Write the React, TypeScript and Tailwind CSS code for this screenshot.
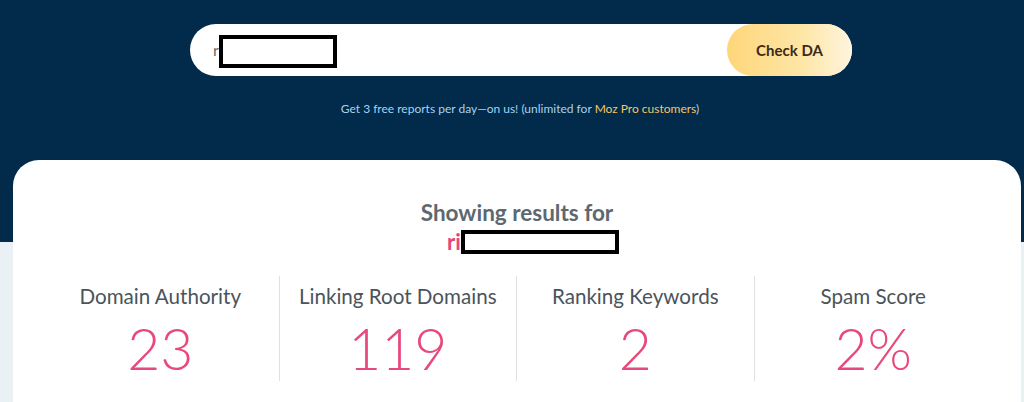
export default function App() {
  const stats = [
    { label: "Domain Authority", value: "23" },
    { label: "Linking Root Domains", value: "119" },
    { label: "Ranking Keywords", value: "2" },
    { label: "Spam Score", value: "2%" },
  ];
  return (
    <div
      className="w-[1024px] h-[402px] overflow-hidden bg-[linear-gradient(to_bottom,#012a4b_0px,#012a4b_242px,#e9f1f4_242px)]"
      style={{ fontFamily: "Lato, 'Open Sans', sans-serif" }}
    >
      <div className="pt-[24px] pl-[190px]">
        <div className="w-[662px] h-[52px] bg-white rounded-full flex items-center justify-between">
          <div className="flex items-center pl-[23px]">
            <span className="text-[16px] text-[#6b6b6b] leading-none">r</span>
            <div className="w-[118px] h-[33px] border-[4px] border-black bg-white mt-[3px]"></div>
          </div>
          <button className="w-[125px] h-[52px] rounded-full bg-[linear-gradient(to_right,#fdd67a,#fee6a6_60%,#fff5df)] text-[15px] font-bold text-[#3b2a17] flex items-center justify-center">
            Check DA
          </button>
        </div>
      </div>
      <div className="mt-[25px] pl-[16px] text-center text-[12px] leading-[16px] text-[#a5d3f0]">
        Get 3 free reports per day—on us! (unlimited for{" "}
        <span className="text-[#f4c66a]">Moz Pro customers</span>)
      </div>
      <div className="ml-[13px] mt-[43px] w-[1008px] h-[300px] bg-white rounded-t-[26px] pt-[39px]">
        <div className="text-center text-[22.5px] leading-[28px] font-bold text-[#5d6870]">
          Showing results for
        </div>
        <div className="flex justify-center items-center pl-[32px] h-[30px]">
          <span className="text-[22px] font-bold text-[#e5467a] leading-[28px]">ri</span>
          <div className="w-[158px] h-[24px] border-[4px] border-black bg-white"></div>
        </div>
        <div className="mt-[19px] mx-[29px] grid grid-cols-4">
          {stats.map((s, i) => (
            <div
              key={s.label}
              className={`h-[105px] flex flex-col items-center pt-[8px] ${i < 3 ? "border-r border-[#dde1e4]" : ""}`}
            >
              <div className="text-[20.6px] leading-[24px] text-[#4a545b]">{s.label}</div>
              <div className="mt-[9px] text-[57px] leading-[62px] font-light text-[#e8497b]">{s.value}</div>
            </div>
          ))}
        </div>
      </div>
    </div>
  );
}
